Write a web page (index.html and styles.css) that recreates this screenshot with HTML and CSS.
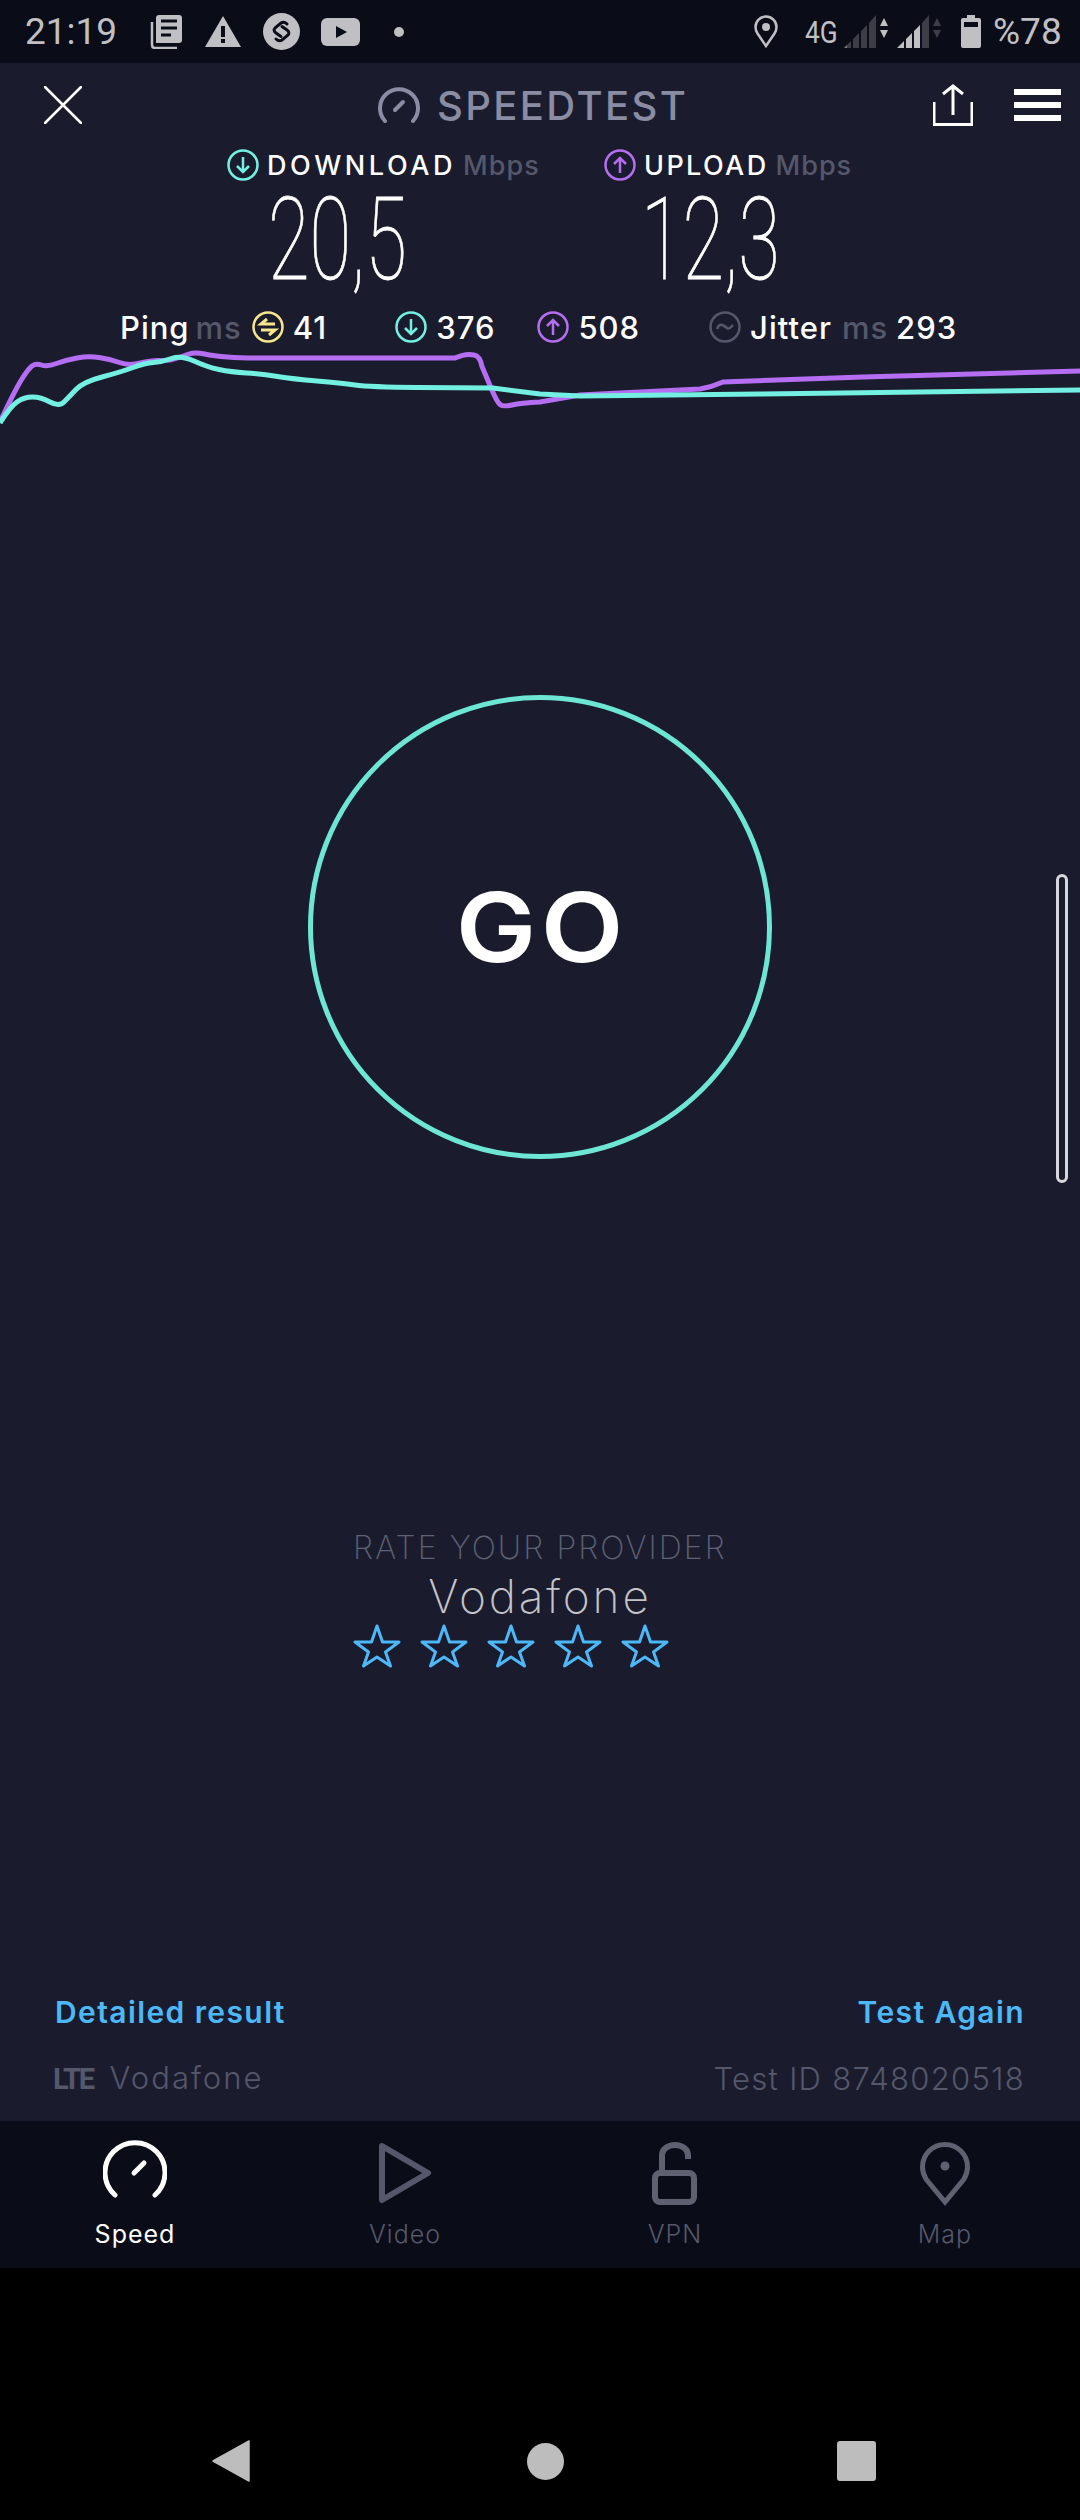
FILE: index.html
```html
<!DOCTYPE html>
<html lang="en">
<head>
	<meta charset="UTF-8">
	<title>Speedtest</title>
	<link rel="stylesheet" href="styles.css">
</head>
<body>
<div id="wrap">
	<div class="status">
		<span class="clock">21:19</span>
		<svg class="st-news" width="32" height="34" viewBox="0 0 32 34">
			<path d="M2 7v23q0 3 3 3h22" fill="none" stroke="#c0c0c4" stroke-width="2.5"/>
			<path d="M9 0h20q3 0 3 3v22q0 3-3 3H6V3q0-3 3-3z" fill="#c0c0c4"/>
			<path d="M11 6h16M11 13h16M11 20h10" stroke="#0a0c18" stroke-width="3"/>
		</svg>
		<svg class="st-warn" width="36" height="31" viewBox="0 0 36 31">
			<path d="M18 0l18 31H0z" fill="#c0c0c4"/>
			<path d="M16 10h4v11h-4zM16 23h4v4h-4z" fill="#0a0c18"/>
		</svg>
		<svg class="st-shazam" width="37" height="37" viewBox="0 0 37 37">
			<circle cx="18.5" cy="18.5" r="18.5" fill="#c0c0c4"/>
			<path d="M24 11Q21 8 18 10L12.500 14.500Q9.500 17.500 13 20L18 23.500M13 26Q16 29 19 27L24.500 22.500Q27.500 19.500 24 17L19 13.500" fill="none" stroke="#0a0c18" stroke-width="3" stroke-linecap="round"/>
		</svg>
		<svg class="st-yt" width="39" height="28" viewBox="0 0 39 28">
			<rect width="39" height="28" rx="6" fill="#c0c0c4"/>
			<path d="M15 8l11 6-11 6z" fill="#0a0c18"/>
		</svg>
		<span class="st-dot"></span>
		<svg class="st-pin" width="24" height="33" viewBox="0 0 24 33">
			<path d="M12 31L3.500 18.500Q1.500 15.500 1.500 12a10.500 10.500 0 0 1 21 0q0 3.500-2 6.500z" fill="none" stroke="#c0c0c4" stroke-width="2.500"/>
			<circle cx="12" cy="12" r="4" fill="#c0c0c4"/>
		</svg>
		<span class="st-net">4G</span>
		<svg class="st-signal" width="44" height="33" viewBox="0 0 44 33">
			<path d="M0 33l7-7v7zM9 24l6-6v15H9zM17 16l6-6v23h-6z" fill="#3c3d46"/>
			<path d="M25 8l7-8v33h-7z" fill="#3c3d46"/>
			<path d="M0 33l3-3v3z" fill="#77787f"/>
			<path d="M36 11l4-8 4 8zM36 15h8l-4 8z" fill="#c0c0c4"/>
		</svg>
		<svg class="st-signal2" width="44" height="33" viewBox="0 0 44 33">
			<path d="M0 33l7-7v7zM9 24l6-6v15H9zM17 16l6-6v23h-6z" fill="#c0c0c4"/>
			<path d="M25 8l7-8v33h-7z" fill="#3c3d46"/>
			<path d="M36 11l4-8 4 8zM36 15h8l-4 8z" fill="#3c3d46"/>
		</svg>
		<svg class="st-batt" width="20" height="33" viewBox="0 0 20 33">
			<path d="M6 0h8v3h4q2 0 2 2v26q0 2-2 2H2q-2 0-2-2V5q0-2 2-2h4z" fill="#c0c0c4"/>
			<rect x="3" y="7" width="14" height="5" fill="#0a0c18"/>
		</svg>
		<span class="st-pct">%78</span>
	</div>

	<div class="app">
		<div class="head">
			<svg class="close" width="38" height="38" viewBox="0 0 38 38">
				<path d="M1 1l36 36M37 1L1 37" stroke="#fff" stroke-width="2.500" stroke-linecap="round"/>
			</svg>
			<svg class="logo" width="42" height="36" viewBox="0 0 42 36">
				<path d="M7 34A19 19 0 1 1 35 34" fill="none" stroke="#8a8ca3" stroke-width="4" stroke-linecap="round"/>
				<path d="M17 23l8-8" stroke="#8a8ca3" stroke-width="4" stroke-linecap="round"/>
			</svg>
			<span class="title">SPEEDTEST</span>
			<svg class="share" width="40" height="42" viewBox="0 0 40 42">
				<path d="M1 18v22.500h38V18" fill="none" stroke="#fff" stroke-width="3"/>
				<path d="M20 31V2M10 10l10-8 10 8" fill="none" stroke="#fff" stroke-width="3"/>
			</svg>
			<div class="menu"><i></i><i></i><i></i></div>
		</div>

		<div class="speeds">
			<div class="speed speed-down">
				<div class="speed-head">
					<svg class="ic" width="32" height="32" viewBox="0 0 32 32">
						<circle cx="16" cy="16" r="14.500" fill="none" stroke="#73f0e2" stroke-width="2.500"/>
						<path d="M16 8v15M10 17l6 6 6-6" fill="none" stroke="#73f0e2" stroke-width="2.500"/>
					</svg>
					<b>DOWNLOAD</b><span>Mbps</span>
				</div>
				<div class="speed-num">20,5</div>
			</div>
			<div class="speed speed-up">
				<div class="speed-head">
					<svg class="ic" width="32" height="32" viewBox="0 0 32 32">
						<circle cx="16" cy="16" r="14.500" fill="none" stroke="#b56ef2" stroke-width="2.500"/>
						<path d="M16 24V9M10 15l6-6 6 6" fill="none" stroke="#b56ef2" stroke-width="2.500"/>
					</svg>
					<b>UPLOAD</b><span>Mbps</span>
				</div>
				<div class="speed-num">12,3</div>
			</div>
		</div>

		<div class="pings">
			<b class="p-ping">Ping</b><span class="p-ms">ms</span>
			<svg class="ic p-ic1" width="32" height="32" viewBox="0 0 32 32">
				<circle cx="16" cy="16" r="14.500" fill="none" stroke="#f7e68a" stroke-width="2.500"/>
				<path d="M23 13H9l6-5M9 19h14l-6 5" fill="none" stroke="#f7e68a" stroke-width="3"/>
			</svg>
			<b class="p-val">41</b>
			<svg class="ic p-ic2" width="32" height="32" viewBox="0 0 32 32">
				<circle cx="16" cy="16" r="14.500" fill="none" stroke="#73f0e2" stroke-width="2.500"/>
				<path d="M16 8v15M10 17l6 6 6-6" fill="none" stroke="#73f0e2" stroke-width="2.500"/>
			</svg>
			<b class="p-val">376</b>
			<svg class="ic p-ic3" width="32" height="32" viewBox="0 0 32 32">
				<circle cx="16" cy="16" r="14.500" fill="none" stroke="#b56ef2" stroke-width="2.500"/>
				<path d="M16 24V9M10 15l6-6 6 6" fill="none" stroke="#b56ef2" stroke-width="2.500"/>
			</svg>
			<b class="p-val">508</b>
			<svg class="ic p-ic4" width="32" height="32" viewBox="0 0 32 32">
				<circle cx="16" cy="16" r="14.500" fill="none" stroke="#55576a" stroke-width="2.500"/>
				<path d="M8 18q2-5 5-4t5 3 6-3" fill="none" stroke="#55576a" stroke-width="2.500"/>
			</svg>
			<b class="p-val">Jitter</b><span class="p-ms2">ms</span><b class="p-val2">293</b>
		</div>

		<svg class="chart" width="1080" height="90" viewBox="0 345 1080 90">
			<path d="M0 423Q14 393 21 381.500Q28 370 32 367Q36 364 41.500 366Q47 368 56.500 364.500Q66 361 77 359Q88 357 99 358.500Q110 360 119.500 363.500Q129 367 140.500 364Q152 361 160.500 361.500Q169 362 176 359.500Q183 357 189 355Q195 353 204.500 355Q214 357 227.500 358Q241 359 260 359L455 359Q466 354 474 356Q480 357 482 367.500Q486 377 491.500 390Q497 403 500 405.500Q503 408 512 406Q521 404 540 403L580 396L700 390Q712 388 723 383L863 378L1080 372" fill="none" stroke="#b56ef2" stroke-width="5"/>
			<path d="M0 424Q10 408 17 403Q24 398 32.500 398Q41 398 50 403Q59 408 64 403Q69 398 76 390.500Q83 383 102 378Q121 373 133 368.500Q145 364 153.500 363.500Q162 363 171.500 359.500Q181 356 194 362Q207 368 219 370.500Q231 373 246.500 374Q262 375 277.500 377.500Q293 380 317 382Q341 384 355 386Q369 388 417.500 388.500L493 389L540 395L580 397L760 395L1080 391" fill="none" stroke="#73f0e2" stroke-width="5"/>
		</svg>

		<div class="go-wrap">
			<div class="go"><span>GO</span></div>
		</div>

		<div class="rate">
			<div class="rate-t">RATE YOUR PROVIDER</div>
			<div class="rate-n">Vodafone</div>
			<div class="stars">
				<svg width="48" height="44" viewBox="0 0 48 44"><path d="M24 2l5.500 16H46L32.500 28 37.500 42 24 33 10.500 42 15.500 28 2 18h16.500z" fill="none" stroke="#4db8f8" stroke-width="3" stroke-linejoin="round"/></svg>
				<svg width="48" height="44" viewBox="0 0 48 44"><path d="M24 2l5.500 16H46L32.500 28 37.500 42 24 33 10.500 42 15.500 28 2 18h16.500z" fill="none" stroke="#4db8f8" stroke-width="3" stroke-linejoin="round"/></svg>
				<svg width="48" height="44" viewBox="0 0 48 44"><path d="M24 2l5.500 16H46L32.500 28 37.500 42 24 33 10.500 42 15.500 28 2 18h16.500z" fill="none" stroke="#4db8f8" stroke-width="3" stroke-linejoin="round"/></svg>
				<svg width="48" height="44" viewBox="0 0 48 44"><path d="M24 2l5.500 16H46L32.500 28 37.500 42 24 33 10.500 42 15.500 28 2 18h16.500z" fill="none" stroke="#4db8f8" stroke-width="3" stroke-linejoin="round"/></svg>
				<svg width="48" height="44" viewBox="0 0 48 44"><path d="M24 2l5.500 16H46L32.500 28 37.500 42 24 33 10.500 42 15.500 28 2 18h16.500z" fill="none" stroke="#4db8f8" stroke-width="3" stroke-linejoin="round"/></svg>
			</div>
		</div>

		<div class="foot">
			<div class="foot-row">
				<a class="link">Detailed result</a>
				<a class="link">Test Again</a>
			</div>
			<div class="foot-row foot-info">
				<span class="carrier"><b class="lte">LTE</b>Vodafone</span>
				<span>Test ID 8748020518</span>
			</div>
		</div>

		<div class="scroll"></div>
	</div>

	<div class="nav">
		<div class="nav-item active">
			<svg width="64" height="66" viewBox="0 0 64 66">
				<path d="M12 55A30 30 0 1 1 52 55" fill="none" stroke="#fff" stroke-width="5" stroke-linecap="round"/>
				<path d="M31 33l10-10" stroke="#fff" stroke-width="5" stroke-linecap="round"/>
			</svg>
			<span>Speed</span>
		</div>
		<div class="nav-item">
			<svg width="64" height="66" viewBox="0 0 64 66">
				<path d="M9 6L55 33 9 60z" fill="none" stroke="#55576a" stroke-width="6" stroke-linejoin="round"/>
			</svg>
			<span>Video</span>
		</div>
		<div class="nav-item">
			<svg width="64" height="66" viewBox="0 0 64 66">
				<rect x="12" y="33" width="39" height="29" rx="5" fill="none" stroke="#5f6170" stroke-width="6"/>
				<path d="M19 31V15A13 10 0 0 1 45 15v4" fill="none" stroke="#5f6170" stroke-width="6"/>
			</svg>
			<span>VPN</span>
		</div>
		<div class="nav-item">
			<svg width="64" height="66" viewBox="0 0 64 66">
				<path d="M32 62L13 39Q9.500 33 9.500 27A22.500 22.500 0 0 1 54.500 27Q54.500 33 51 39z" fill="none" stroke="#5f6170" stroke-width="5"/>
				<circle cx="32" cy="26" r="4.500" fill="#5f6170"/>
			</svg>
			<span>Map</span>
		</div>
	</div>

	<div class="keys">
		<svg width="38" height="42" viewBox="0 0 38 42"><path d="M37 1v40L1 21z" fill="#bdbdbd" stroke="#bdbdbd" stroke-width="1.500" stroke-linejoin="round"/></svg>
		<span class="key-home"></span>
		<span class="key-recent"></span>
	</div>
</div>
</body>
</html>
```
FILE: styles.css
```css
body {
	margin: 0;
	background: #000;
	font-family: Inter, "Noto Sans", sans-serif;
}
svg {
	display: block;
	flex: none;
}
#wrap {
	width: 1080px;
	height: 2520px;
	display: flex;
	flex-direction: column;
	overflow: hidden;
}

/* status bar */
.status {
	height: 63px;
	background: #0a0c18;
	display: flex;
	align-items: center;
	color: #c0c0c4;
	font-family: Roboto, sans-serif;
	padding-left: 25px;
}
.clock {
	font-size: 37px;
	width: 125px;
}
.st-warn { margin-left: 23px; }
.st-shazam { margin-left: 22px; }
.st-yt { margin-left: 21px; }
.st-dot {
	width: 10px;
	height: 10px;
	border-radius: 50%;
	background: #c0c0c4;
	margin-left: 34px;
}
.st-pin { margin-left: 350px; }
.st-net {
	font-size: 32px;
	width: 39px;
	margin-left: 27px;
	transform: scaleX(.82);
	transform-origin: left center;
}
.st-signal { margin-left: 0; }
.st-signal2 { margin-left: 9px; }
.st-batt { margin-left: 20px; }
.st-pct {
	font-size: 37px;
	margin-left: 12px;
}

/* main */
.app {
	position: relative;
	flex: 1;
	background: #1a1c2e;
	display: flex;
	flex-direction: column;
}
.head {
	height: 84px;
	display: flex;
	align-items: center;
	padding-left: 44px;
}
.logo { margin-left: 296px; }
.title {
	font-size: 40px;
	font-weight: 500;
	letter-spacing: 2.4px;
	color: #8a8ca3;
	margin-left: 17px;
}
.share { margin-left: 245px; }
.menu {
	margin-left: 41px;
	width: 47px;
	display: flex;
	flex-direction: column;
	gap: 7px;
}
.menu i {
	display: block;
	height: 6px;
	background: #fff;
}

.speeds {
	display: flex;
	padding: 2px 0 0 227px;
}
.speed-down { width: 377px; }
.speed-head {
	display: flex;
	align-items: center;
	height: 32px;
	font-size: 27px;
}
.speed-head b {
	font-weight: 500;
	letter-spacing: 2.4px;
	color: #fff;
	margin-left: 8px;
}
.speed-down .speed-head b { letter-spacing: 3.6px; }
.speed-head span {
	color: #55576a;
	font-weight: 500;
	letter-spacing: 1px;
	margin-left: 7px;
}
.speed-num {
	font-family: Roboto, sans-serif;
	font-weight: 100;
	font-size: 115px;
	line-height: 118px;
	color: #fff;
	margin: 0 0 12px 41px;
	transform: scaleX(.66);
	transform-origin: left center;
	-webkit-text-stroke: .8px #fff;
}
.speed-up .speed-num { margin-left: 37px; }

.pings {
	display: flex;
	align-items: center;
	height: 32px;
	padding-left: 120px;
	font-size: 31px;
	letter-spacing: 1px;
	color: #fff;
}
.pings b { font-weight: 500; }
.p-ms, .p-ms2 {
	color: #55576a;
	font-weight: 500;
}
.p-ms { margin-left: 6px; }
.p-ic1 { margin-left: 10px; }
.p-val { margin-left: 9px; }
.p-ic2 { margin-left: 68px; }
.p-ic3 { margin-left: 42px; }
.p-ic4 { margin-left: 69px; }
.p-ms2 { margin-left: 10px; }
.p-val2 { margin-left: 8px; }

.chart { margin-top: 1px; }

.go-wrap {
	margin-top: 261px;
	display: flex;
	justify-content: center;
}
.go {
	width: 454px;
	height: 454px;
	border: 5px solid #6de6d4;
	border-radius: 50%;
	display: flex;
	align-items: center;
	justify-content: center;
	font-size: 96px;
	font-weight: 600;
	letter-spacing: 4px;
	color: #fff;
}
.go span {
	margin-left: 3px;
	transform: scaleX(1.12);
}

.rate {
	margin-top: 369px;
	display: flex;
	flex-direction: column;
	align-items: center;
}
.rate-t {
	font-size: 32px;
	line-height: 40px;
	font-weight: 200;
	letter-spacing: 2.1px;
	color: #5f6174;
}
.rate-n {
	font-size: 46px;
	line-height: 56px;
	font-weight: 200;
	letter-spacing: 2.8px;
	color: #c4c4c9;
}
.stars {
	display: flex;
	gap: 19px;
	width: 374px;
}

.foot {
	margin-top: auto;
	padding: 0 55px 22px;
}
.foot-row {
	display: flex;
	justify-content: space-between;
	align-items: center;
}
.link {
	font-size: 30px;
	font-weight: 600;
	letter-spacing: 1.4px;
	color: #4db8f8;
	line-height: 40px;
}
.foot-info {
	margin-top: 26px;
	font-size: 31px;
	font-weight: 300;
	letter-spacing: 1.3px;
	color: #55576a;
	line-height: 40px;
}
.carrier { letter-spacing: 2px; }
.lte {
	font-family: Roboto, sans-serif;
	font-size: 29px;
	font-weight: 700;
	letter-spacing: -2.4px;
	margin-right: 17px;
	margin-left: -2px;
}
.scroll {
	position: absolute;
	left: 1056px;
	top: 811px;
	width: 12px;
	height: 309px;
	box-sizing: border-box;
	border: 3px solid #d8d8dc;
	border-radius: 6px;
}

/* bottom nav */
.nav {
	height: 147px;
	background: #0a0c18;
	display: grid;
	grid-template-columns: repeat(4, 270px);
}
.nav-item {
	display: flex;
	flex-direction: column;
	align-items: center;
	padding-top: 19px;
	font-size: 25px;
	font-weight: 300;
	letter-spacing: 1px;
	color: #55576a;
}
.nav-item span { margin-top: 13px; }
.nav-item.active {
	color: #fff;
	font-weight: 400;
}

/* android keys */
.keys {
	height: 252px;
	background: #000;
	display: flex;
	align-items: center;
	padding-left: 212px;
	padding-top: 134px;
	box-sizing: border-box;
}
.key-home {
	width: 37px;
	height: 37px;
	border-radius: 50%;
	background: #bdbdbd;
	margin-left: 277px;
}
.key-recent {
	width: 39px;
	height: 40px;
	border-radius: 3px;
	background: #bdbdbd;
	margin-left: 273px;
}
```
